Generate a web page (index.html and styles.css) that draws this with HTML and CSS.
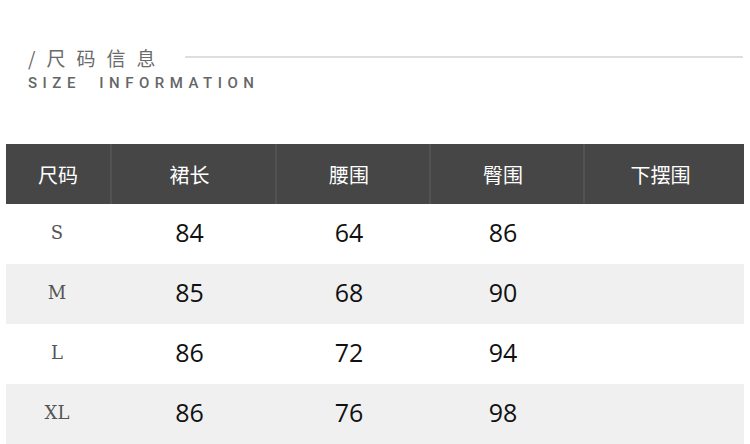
FILE: index.html
```html
<!DOCTYPE html>
<html lang="zh">
<head>
<meta charset="utf-8">
<link rel="stylesheet" href="styles.css">
</head>
<body>
<div class="page">
  <div class="intro">
    <div class="title-row">
      <span class="title">/尺码信息</span>
      <span class="rule"></span>
    </div>
    <div class="subtitle">SIZE&nbsp;&nbsp;INFORMATION</div>
  </div>
  <div class="table">
    <div class="row head">
      <div class="cell">尺码</div>
      <div class="cell">裙长</div>
      <div class="cell">腰围</div>
      <div class="cell">臀围</div>
      <div class="cell">下摆围</div>
    </div>
    <div class="row">
      <div class="cell size">S</div>
      <div class="cell num">84</div>
      <div class="cell num">64</div>
      <div class="cell num">86</div>
      <div class="cell num"></div>
    </div>
    <div class="row alt">
      <div class="cell size">M</div>
      <div class="cell num">85</div>
      <div class="cell num">68</div>
      <div class="cell num">90</div>
      <div class="cell num"></div>
    </div>
    <div class="row">
      <div class="cell size">L</div>
      <div class="cell num">86</div>
      <div class="cell num">72</div>
      <div class="cell num">94</div>
      <div class="cell num"></div>
    </div>
    <div class="row alt">
      <div class="cell size">XL</div>
      <div class="cell num">86</div>
      <div class="cell num">76</div>
      <div class="cell num">98</div>
      <div class="cell num"></div>
    </div>
  </div>
</div>
</body>
</html>
```

FILE: styles.css
```css
html, body {
  margin: 0;
  padding: 0;
  background: #fff;
}

.page {
  width: 750px;
  height: 444px;
  overflow: hidden;
}

.intro {
  padding: 43px 7px 0 28px;
}

.title-row {
  display: flex;
  align-items: center;
  height: 28px;
}

.title {
  font-family: "Noto Sans CJK SC", "Noto Sans", sans-serif;
  font-weight: 400;
  font-size: 19px;
  letter-spacing: 11px;
  color: #6a6a6a;
  white-space: nowrap;
}

.rule {
  flex: 1;
  height: 2px;
  background: #dedede;
  margin-left: 19px;
}

.subtitle {
  margin-top: 3px;
  font-family: "Roboto", sans-serif;
  font-weight: 500;
  font-size: 15px;
  letter-spacing: 5.5px;
  color: #666;
  white-space: pre;
  line-height: 18px;
}

.table {
  margin: 52px 6px 0 6px;
}

.row {
  display: grid;
  grid-template-columns: 104px 165px 154px 154px 161px;
  height: 60px;
  background: #fff;
}

.row.alt {
  background: #f0f0f0;
}

.row.head {
  background: #464646;
}

.cell {
  display: flex;
  align-items: center;
  justify-content: center;
}

.head .cell {
  font-family: "Noto Sans CJK SC", sans-serif;
  font-size: 20px;
  color: #fff;
  border-left: 2px solid #525252;
  padding-right: 8px;
}

.head .cell:first-child {
  border-left: none;
  padding-right: 0;
}

.size {
  font-family: "DejaVu Serif", serif;
  font-size: 18px;
  color: #555;
  padding-right: 2px;
  padding-bottom: 3px;
}

.num {
  font-family: "Open Sans", "Noto Sans", sans-serif;
  font-size: 25px;
  color: #111;
  padding-right: 6px;
  padding-bottom: 5px;
}
```
